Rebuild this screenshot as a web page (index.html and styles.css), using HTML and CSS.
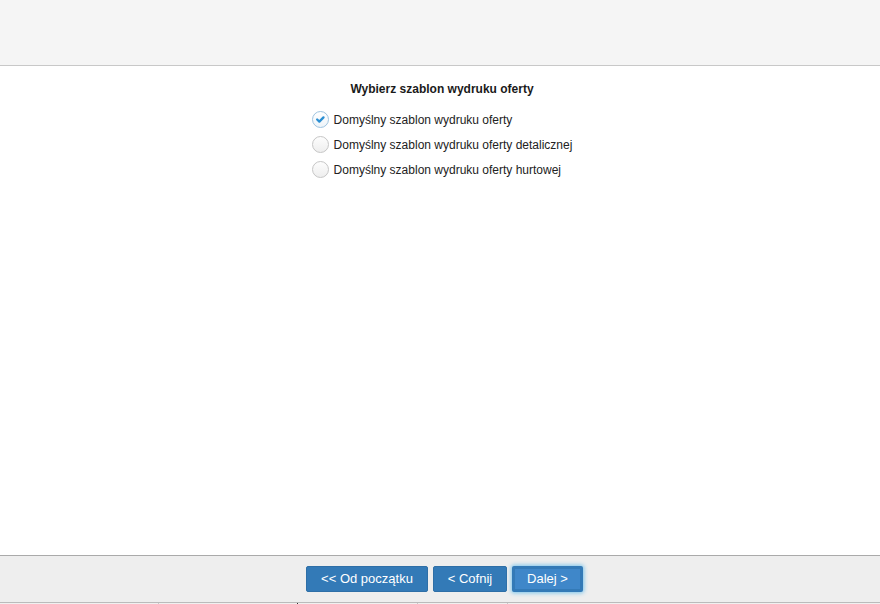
FILE: index.html
```html
<!DOCTYPE html>
<html lang="pl">
<head>
<meta charset="utf-8">
<title>Wybierz szablon</title>
<link rel="stylesheet" href="styles.css">
</head>
<body>
<div class="page">
  <header class="topbar"></header>
  <main class="content">
    <h1 class="title">Wybierz szablon wydruku oferty</h1>
    <div class="options">
      <label class="option">
        <span class="radio checked">
          <svg viewBox="0 0 17 17" width="17" height="17"><path d="M4.7 8.5 L7.2 10.9 L11.9 6.1" fill="none" stroke="#2b8fd3" stroke-width="2.6" stroke-linecap="round" stroke-linejoin="round"/></svg>
        </span>
        <span class="label">Domyślny szablon wydruku oferty</span>
      </label>
      <label class="option">
        <span class="radio"></span>
        <span class="label">Domyślny szablon wydruku oferty detalicznej</span>
      </label>
      <label class="option">
        <span class="radio"></span>
        <span class="label">Domyślny szablon wydruku oferty hurtowej</span>
      </label>
    </div>
  </main>
  <footer class="footer">
    <button class="btn b1">&lt;&lt; Od początku</button>
    <button class="btn b2">&lt; Cofnij</button>
    <button class="btn focus">Dalej &gt;</button>
  </footer>
  <div class="under">
    <span class="cell c1"></span><span class="cell c2"></span><span class="cell c3"></span><span class="cell c4"></span>
  </div>
</div>
</body>
</html>
```
FILE: styles.css
```css
* { box-sizing: border-box; }
html, body { margin: 0; padding: 0; }
body {
  width: 880px;
  height: 604px;
  overflow: hidden;
  font-family: "Liberation Sans", Arial, sans-serif;
  font-size: 12px;
  color: #222;
  background: #fff;
}
.page { display: flex; flex-direction: column; height: 604px; }
.topbar {
  height: 66px;
  background: #f5f5f5;
  border-bottom: 1px solid #c8c8c8;
  flex: none;
}
.content {
  height: 489px;
  flex: none;
  display: flex;
  flex-direction: column;
  align-items: center;
  background: #fff;
  padding-left: 4px;
}
.title {
  margin: 16px 0 0;
  font-size: 12px;
  font-weight: bold;
  line-height: 14px;
  color: #1a1a1a;
}
.options {
  margin-top: 15px;
  display: flex;
  flex-direction: column;
  gap: 8px;
}
.option {
  display: flex;
  align-items: center;
  gap: 5px;
  height: 17px;
  color: #222;
}
.radio {
  width: 17px;
  height: 17px;
  border-radius: 50%;
  border: 1px solid #c6c6c6;
  background: linear-gradient(#fdfdfd, #eeeeee);
  display: flex;
  align-items: center;
  justify-content: center;
  flex: none;
}
.radio.checked {
  border-color: #9fc4e0;
  background: linear-gradient(#ffffff, #eef4f9);
}
.radio svg { display: block; }
.label { line-height: 14px; }
.footer {
  height: 47px;
  flex: none;
  background: #eeeeee;
  border-top: 1px solid #aaaaaa;
  display: flex;
  justify-content: center;
  align-items: flex-start;
  padding-top: 10px;
  padding-left: 9px;
  gap: 5px;
}
.btn {
  height: 26px;
  border: 1px solid #2e6fa7;
  border-radius: 2px;
  background: #337ab7;
  color: #fff;
  font-family: "Liberation Sans", Arial, sans-serif;
  font-size: 13px;
  padding: 0;
  line-height: 24px;
  white-space: nowrap;
  text-align: center;
  cursor: pointer;
}
.b1 { width: 122px; }
.b2 { width: 74px; }
.btn.focus {
  width: 71px;
  background: #3f87c9;
  border: 3px solid #337ab7;
  box-shadow: 0 0 4px 1px #79c4ec;
  line-height: 20px;
}
.under {
  flex: 1;
  border-top: 1px solid #bbbbbb;
  background: #f0f0f0;
  position: relative;
}
.cell { position: absolute; top: 0; width: 1px; height: 3px; background: #c8c8c8; }
.c1 { left: 158px; }
.c2 { left: 297px; background: #333; }
.c3 { left: 417px; }
.c4 { left: 507px; }
```
